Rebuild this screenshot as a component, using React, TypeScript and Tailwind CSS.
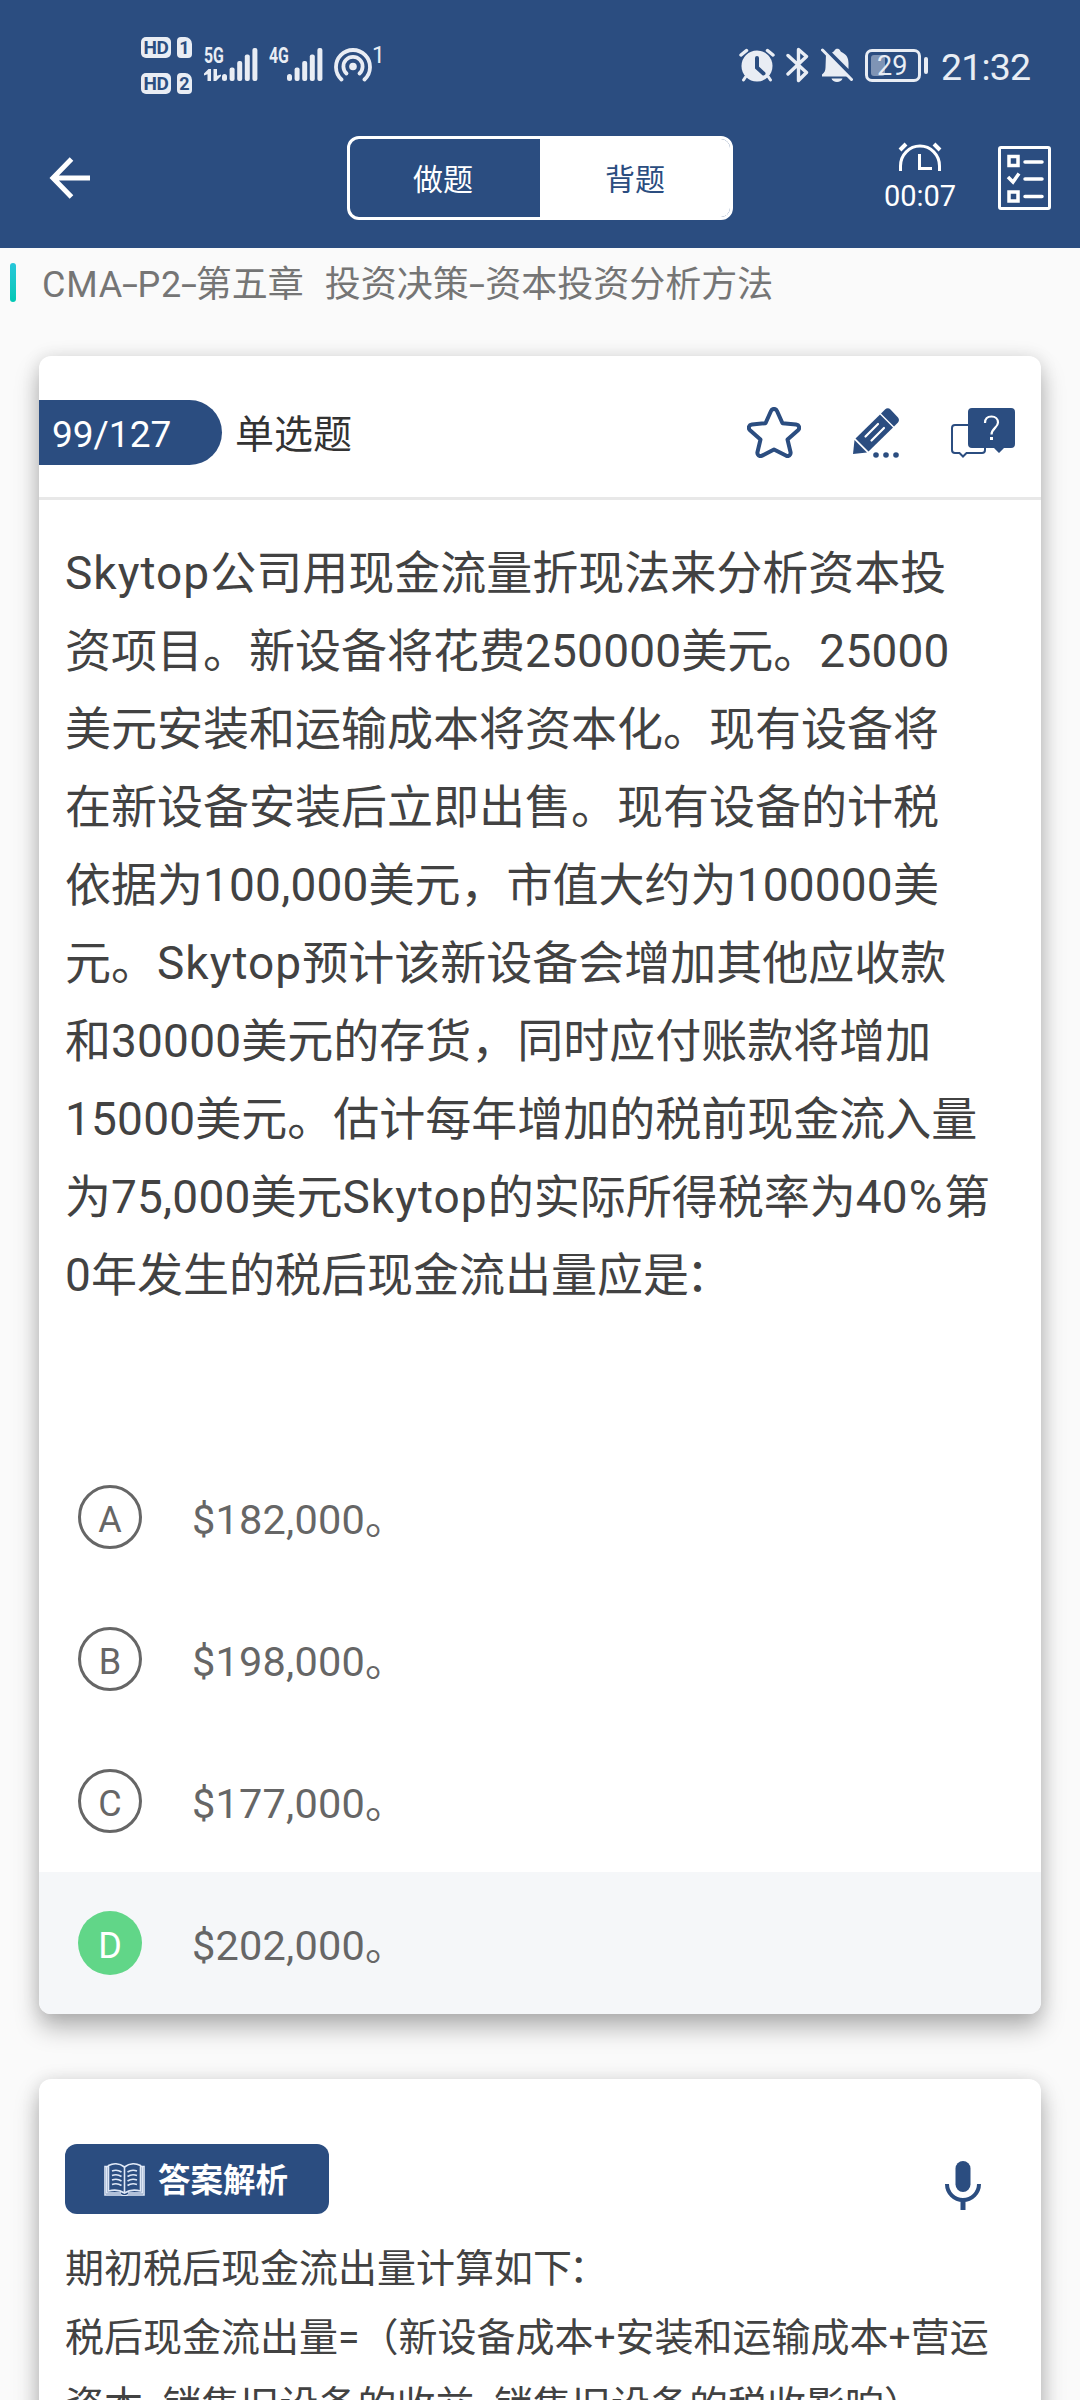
import React from "react";
import clsx from "clsx";

const questionLines = [
  "Skytop公司用现金流量折现法来分析资本投",
  "资项目。新设备将花费250000美元。25000",
  "美元安装和运输成本将资本化。现有设备将",
  "在新设备安装后立即出售。现有设备的计税",
  "依据为100,000美元，市值大约为100000美",
  "元。Skytop预计该新设备会增加其他应收款",
  "和30000美元的存货，同时应付账款将增加",
  "15000美元。估计每年增加的税前现金流入量",
  "为75,000美元Skytop的实际所得税率为40%第",
  "0年发生的税后现金流出量应是：",
];

const options = [
  { letter: "A", text: "$182,000。" },
  { letter: "B", text: "$198,000。" },
  { letter: "C", text: "$177,000。" },
  { letter: "D", text: "$202,000。", correct: true },
];

const answerLines = [
  "期初税后现金流出量计算如下：",
  "税后现金流出量=（新设备成本+安装和运输成本+营运",
  "资本-销售旧设备的收益-销售旧设备的税收影响）",
];

// Latin runs are a touch looser than the Chinese around them, hyphens are wider
function MixedText({ text, hyphen = "w-[0.5em]" }: { text: string; hyphen?: string }) {
  return (
    <>
      {text.split(/([A-Za-z]+|[\d,]+|-|：|%)/).map((part, i) => {
        if (part === "-") {
          return (
            <span key={i} className={clsx("inline-block text-center", hyphen)}>
              <span className="inline-block scale-x-[1.6]">-</span>
            </span>
          );
        }
        if (part === "：") {
          return (
            <span key={i} className="-ml-[3px]">
              ：
            </span>
          );
        }
        if (part === "%") {
          return (
            <span key={i} className="ml-px tracking-[1.500px]">
              %
            </span>
          );
        }
        if (/^[A-Za-z]/.test(part)) {
          return (
            <span key={i} className="tracking-[0.022em]">
              {part}
            </span>
          );
        }
        if (/^\d/.test(part)) {
          return (
            <span key={i} className="tracking-[0.2px]">
              {part}
            </span>
          );
        }
        return part;
      })}
    </>
  );
}

function HdBadge({ sim }: { sim: string }) {
  return (
    <div className="flex items-center gap-[6px] text-[#2b4d80]">
      <div className="flex h-[21px] w-[30px] items-center justify-center rounded-[5px] bg-[#e9edf4] text-[19px] leading-none font-bold tracking-[-0.5px]">
        HD
      </div>
      <div className="flex h-[21px] w-[15px] items-center justify-center rounded-[4px] rounded-tr-[7px] bg-[#e9edf4] text-[18px] leading-none font-bold">
        {sim}
      </div>
    </div>
  );
}

function SignalBars() {
  return (
    <svg width="36" height="33" viewBox="0 0 36 33" fill="currentColor">
      <rect x="0" y="26" width="5" height="7" rx="2.5" />
      <rect x="7.6" y="19.5" width="5" height="13.5" rx="2" />
      <rect x="15.2" y="13" width="5" height="20" rx="2" />
      <rect x="22.8" y="6.5" width="5" height="26.5" rx="2" />
      <rect x="30.4" y="0" width="5" height="33" rx="2" />
    </svg>
  );
}

function StatusBar() {
  return (
    <div className="flex h-[108px] text-[#e9edf4]">
      <div className="ml-[141px] flex flex-col gap-[15px] pt-[37px]">
        <HdBadge sim="1" />
        <HdBadge sim="2" />
      </div>
      <div className="ml-[12px] flex items-end self-start pt-[48px]">
        <div className="flex h-[33px] w-[18px] flex-col justify-between">
          <span className="block origin-left scale-x-[0.72] text-[22px] leading-[16px] font-bold">5G</span>
          <svg width="17" height="12" viewBox="0 0 17 12" fill="currentColor">
            <path d="M0 4.500 4.500 0H7v12H3.500V5.200L0 6.500zM9.500 0H13v6.800L17 5.500V7l-5 5H9.500z" />
          </svg>
        </div>
        <SignalBars />
      </div>
      <div className="ml-[11px] flex self-start pt-[48px]">
        <div className="h-[33px] w-[18px]">
          <span className="block origin-left scale-x-[0.72] text-[22px] leading-[16px] font-bold">4G</span>
        </div>
        <SignalBars />
      </div>
      <div className="ml-[11px] flex pt-[48px]">
        <svg width="38" height="34" viewBox="0 0 38 34" fill="none" stroke="currentColor" strokeWidth="3.8" strokeLinecap="round">
          <path d="M7.5 31.5A17 17 0 1 1 30.500 31.500" />
          <path d="M12.500 25.500A9.600 9.600 0 1 1 25.500 25.500" />
          <circle cx="19" cy="18.500" r="3.800" fill="currentColor" stroke="none" />
        </svg>
        <span className="-mt-[4px] text-[23px] leading-[23px]">1</span>
      </div>
      <div className="mt-[48px] mr-[49px] ml-auto flex h-[34px] items-center self-start">
        <svg width="36" height="34" viewBox="0 0 36 34" fill="none" stroke="currentColor" strokeLinecap="round">
          <circle cx="18" cy="18" r="15.500" fill="currentColor" stroke="none" />
          <path d="M2 7 7.500 2.500M34 7l-5.500-4.500" strokeWidth="3.500" />
          <path d="M6.500 29l-2 3M29.500 29l2 3" strokeWidth="3" />
          <path d="M18 10v9.500l6.500 6" stroke="#2b4d80" strokeWidth="4" />
        </svg>
        <svg className="ml-[11px]" width="23" height="36" viewBox="0 0 23 36" fill="none" stroke="currentColor" strokeWidth="3.400" strokeLinejoin="round" strokeLinecap="round">
          <path d="M2 8.500 20.500 25.500 12.500 33.500V2.500L20.500 9.500 2 27" />
        </svg>
        <svg className="ml-[12px]" width="33" height="34" viewBox="0 0 33 34" fill="currentColor">
          <path d="M1.500 2 30.500 31.500" stroke="currentColor" strokeWidth="3" strokeLinecap="round" />
          <path d="M11 4.500c1.500-.8 2-1 2.500-2C14.500.2 18.200.2 19.200 2.500c.3 1 .8 1.400 1.700 1.800C25.500 6.500 27.500 10 27.500 15v6z" />
          <path d="M5 6 27 28.500H1v-2c2.500-2 3.500-4 3.500-7z" />
          <path d="M10.500 30.500h11c-1 4.500-10 4.500-11 0z" />
        </svg>
        <div className="ml-[11px] flex h-[33px] w-[56px] items-center rounded-[7px] border-[3px] border-current pl-[3px]">
          <div className="h-[21px] w-[14px] rounded-[3px] bg-[#7f94b5]" />
          <span className="-ml-[8px] pt-px text-[27px] leading-[28px]">29</span>
        </div>
        <div className="ml-[3px] h-[17px] w-[4px] rounded-full bg-[#e9edf4]" />
        <span className="ml-[13px] w-[90px] pt-[3px] text-[37.500px] leading-[38px] tracking-[-0.8px] whitespace-nowrap">
          21:32
        </span>
      </div>
    </div>
  );
}

function NavBar() {
  return (
    <div className="flex h-[140px] text-white">
      <svg className="mt-[49px] ml-[48px]" width="43" height="42" viewBox="0 0 43 42" fill="none" stroke="currentColor" strokeWidth="5">
        <path d="M42 21H5M23.500 2 5 21l18.500 19" />
      </svg>
      <div className="mt-[28px] ml-[256px] flex h-[84px] w-[386px] overflow-hidden rounded-[12px] border-[3px] border-white text-[30px]">
        <div className="flex w-1/2 items-center justify-center pt-[2px] pr-[4px]">做题</div>
        <div className="flex w-1/2 items-center justify-center bg-white pt-[2px] text-[#2b4d80]">背题</div>
      </div>
      <div className="mt-[34px] ml-[149px] flex w-[76px] flex-col items-center">
        <svg width="44" height="29" viewBox="0 0 44 29" fill="none" stroke="currentColor" strokeWidth="3">
          <path d="M2.500 29V24a19.500 20 0 0 1 39 0v5" />
          <path d="M2 8 8 2M42 8l-6-6" strokeWidth="4" />
          <path d="M21.500 12v14.500H34" />
        </svg>
        <span className="mt-[6px] text-[29px] leading-[38px]">00:07</span>
      </div>
      <svg className="mt-[38px] ml-[40px]" width="53" height="64" viewBox="0 0 53 64" fill="none" stroke="currentColor">
        <rect x="1.500" y="1.500" width="50" height="61" rx="1.500" strokeWidth="3" />
        <rect x="11" y="10.500" width="9" height="9" strokeWidth="3.500" />
        <rect x="11" y="46" width="9" height="9" strokeWidth="3.500" />
        <path d="M10 31l5 5 6-8.500" strokeWidth="3.500" />
        <path d="M27 16h17M27 33h17M27 50.500h17" strokeWidth="3.500" strokeLinecap="round" />
      </svg>
    </div>
  );
}

function StarIcon() {
  return (
    <svg width="54" height="51" viewBox="0 0 54 51" fill="none" stroke="#2b4d80" strokeWidth="4" strokeLinejoin="round">
      <path d="M24 4c1.200-2.800 4.800-2.800 6 0l5.500 12.200 13.500 1.300c3 .4 4.300 3.600 2 5.800L40.500 32.500l3 12.500c.7 3-2 5-4.600 3.600L27 42.500l-11.900 6.100C12.500 50 9.800 48 10.500 45l3-12.500L3 23.300c-2.300-2.200-1-5.400 2-5.800l13.500-1.300z" />
    </svg>
  );
}

function PencilIcon() {
  return (
    <svg width="46" height="50" viewBox="0 0 46 50" fill="#2b4d80">
      <path d="M32 1.500c1.600-1.600 4-1.600 5.500 0l7.500 8c1.300 1.500 1.300 3.500 0 5L41 18.500 28 5.500z" />
      <path d="M27 6.500 40 19.500 15.500 43.500 2.500 30.500z" />
      <path d="M1.500 32 14 44.500 0 46z" />
      <path d="M12.500 28.500 25 16M18.500 32.500 31 20" stroke="#fff" strokeWidth="2.200" strokeLinecap="round" />
      <circle cx="23" cy="47" r="2.800" />
      <circle cx="33" cy="47" r="2.800" />
      <circle cx="43" cy="47" r="2.800" />
    </svg>
  );
}

function QuestionIcon() {
  return (
    <svg width="64" height="50" viewBox="0 0 64 50" fill="none">
      <path d="M18 17H4a3 3 0 0 0-3 3v22a3 3 0 0 0 3 3h4.500l3.500 3.500 3.500-3.500H31a3 3 0 0 0 3-3v-3" stroke="#2b4d80" strokeWidth="2" />
      <path d="M21 0h39a4 4 0 0 1 4 4v32a4 4 0 0 1-4 4h-7l-5 5-5-5H21a4 4 0 0 1-4-4V4a4 4 0 0 1 4-4z" fill="#2b4d80" />
      <path d="M34 15c0-4.500 2.800-6.500 6.500-6.500 4 0 6.500 2.500 6.500 6 0 5-6.500 6-6.500 12" stroke="#fff" strokeWidth="2.200" />
      <rect x="39" y="29" width="3" height="3" fill="#fff" />
    </svg>
  );
}

function BookIcon() {
  return (
    <svg width="41" height="33" viewBox="0 0 41 33" fill="none" stroke="#dfe8f6" strokeWidth="1.600">
      <path d="M4.500 3.500H1V32h16.500c1 1 5 1 6 0H40V3.500h-3.500" />
      <path d="M4.500 2.500C10 0 16 .5 20.500 4 25 .5 31 0 36.500 2.500V28c-5.500-1.500-11.500-1-16 2-4.500-3-10.500-3.500-16-2z" />
      <path d="M20.500 4v26M2.800 4v26H17M38.200 4v26H24" />
      <path d="M8 8q5-2 9.500 1M8 12.500q5-2 9.500 1M8 17q5-2 9.500 1M8 21.500q5-2 9.500 1M23.500 9q4.500-3 9.500-1M23.500 13.500q4.500-3 9.500-1M23.500 18q4.500-3 9.500-1M23.500 22.500q4.500-3 9.500-1" />
    </svg>
  );
}

function MicIcon() {
  return (
    <svg width="36" height="50" viewBox="0 0 36 50" fill="none">
      <rect x="10.500" y="0" width="15" height="31" rx="7.500" fill="#2b4d80" />
      <path d="M2 23a16 16 0 0 0 32 0" stroke="#2b4d80" strokeWidth="4" />
      <path d="M18 38v11" stroke="#2b4d80" strokeWidth="5" />
    </svg>
  );
}

function QuestionCard() {
  return (
    <div className="mx-[39px] mt-[36px] h-[1658px] overflow-hidden rounded-[12px] bg-white shadow-[0_14px_24px_rgba(0,0,0,0.28),0_0_18px_rgba(0,0,0,0.1)]">
      <div className="flex h-[144px] items-center border-b-[3px] border-[#e8e8e8] pt-[11px]">
        <div className="flex h-[65px] w-[183px] items-center rounded-r-full bg-[#2b4d80] pt-[6px] pl-[13px] text-[37px] text-white">
          99/127
        </div>
        <span className="ml-[13px] pt-[6px] text-[39px] leading-[65px] text-[#333]">单选题</span>
        <div className="mr-[26px] ml-auto flex items-center gap-[52px] pt-px">
          <StarIcon />
          <PencilIcon />
          <QuestionIcon />
        </div>
      </div>
      <div className="h-[946px] pt-[34px] pl-[26px] text-[46px] leading-[78px] text-[#424242]">
        {questionLines.map((line) => (
          <p key={line} className="whitespace-nowrap">
            <MixedText text={line} />
          </p>
        ))}
      </div>
      {options.map(({ letter, text, correct }) => (
        <div key={letter} className={clsx("flex h-[142px] items-center pl-[39px]", correct && "bg-[#f5f7f9]")}>
          <div
            className={clsx(
              "flex h-[64px] w-[64px] items-center justify-center rounded-full pt-[5px] text-[36px]",
              correct ? "bg-[#61d688] text-white" : "border-[3px] border-[#666] text-[#666]"
            )}
          >
            {letter}
          </div>
          <span className="ml-[50px] pt-[6px] text-[41.500px] tracking-[0.2px] text-[#666]">{text}</span>
        </div>
      ))}
    </div>
  );
}

function AnswerCard() {
  return (
    <div className="mx-[39px] mt-[65px] h-[500px] rounded-[12px] bg-white pt-[65px] pl-[26px] shadow-[0_14px_24px_rgba(0,0,0,0.28),0_0_18px_rgba(0,0,0,0.1)]">
      <div className="flex items-start justify-between pr-[60px]">
        <div className="flex h-[70px] w-[264px] items-center rounded-[12px] bg-[#2b4d80] pl-[39px] text-white">
          <BookIcon />
          <span className="ml-[13px] pt-[5px] text-[32.500px] leading-none font-bold">答案解析</span>
        </div>
        <div className="pt-[17px]">
          <MicIcon />
        </div>
      </div>
      <div className="pt-[21px] text-[39px] leading-[68.500px] text-[#424242]">
        {answerLines.map((line) => (
          <p key={line} className="whitespace-nowrap">
            <MixedText text={line} />
          </p>
        ))}
      </div>
    </div>
  );
}

export default function App() {
  return (
    <div className="h-[2400px] w-[1080px] overflow-hidden bg-[#fafafa] font-[Roboto,'Noto_Sans_CJK_SC',sans-serif]">
      <div className="bg-[#2b4d80]">
        <StatusBar />
        <NavBar />
      </div>
      <div className="flex h-[72px] items-center pl-[10px]">
        <div className="-mt-[3px] h-[39px] w-[6px] rounded-full bg-linear-to-b from-[#26c6da] to-[#00c8b4]" />
        <span className="ml-[26px] pt-[3px] text-[36px] leading-[69px] whitespace-pre text-[#757575]">
          <MixedText text="CMA-P2-第五章" hyphen="w-[0.4em]" />
          <span className="tracking-[1.500px]">{"  "}</span>
          <MixedText text="投资决策-资本投资分析方法" hyphen="w-[0.46em]" />
        </span>
      </div>
      <QuestionCard />
      <AnswerCard />
    </div>
  );
}
